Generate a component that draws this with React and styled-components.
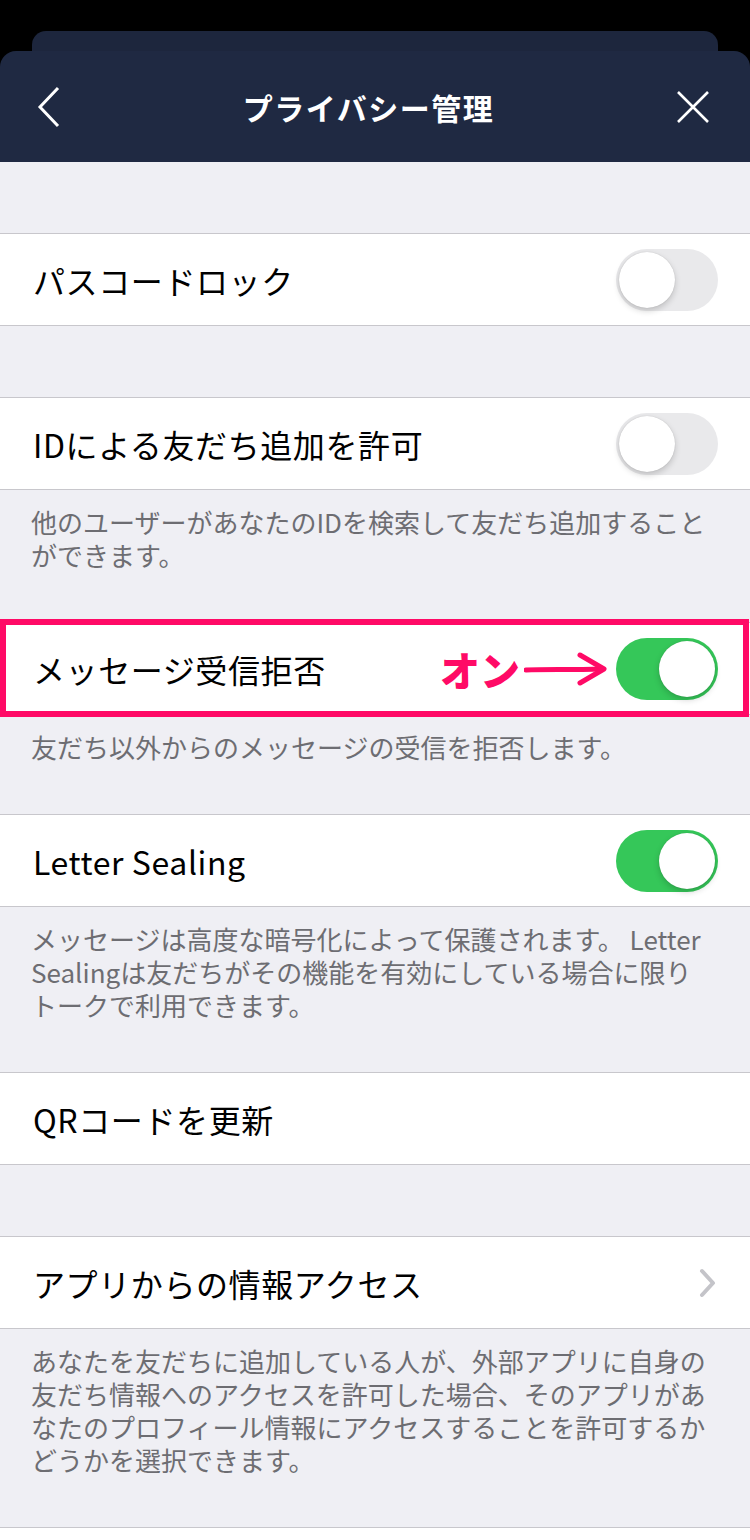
import React, { useState } from 'react';
import styled, { createGlobalStyle } from 'styled-components';

const GlobalStyle = createGlobalStyle`
  * { box-sizing: border-box; }
  html, body {
    margin: 0;
    padding: 0;
    background: #000;
    font-family: "Noto Sans CJK JP", "Noto Sans", sans-serif;
  }
`;

const sections = [
  { gap: true },
  { id: 'passcode', label: 'パスコードロック', type: 'toggle', on: false },
  { gap: true },
  {
    id: 'idadd',
    label: 'IDによる友だち追加を許可',
    type: 'toggle',
    on: false,
    note: ['他のユーザーがあなたのIDを検索して友だち追加すること', 'ができます。'],
  },
  {
    id: 'reject',
    label: 'メッセージ受信拒否',
    type: 'toggle',
    on: true,
    marked: true,
    note: ['友だち以外からのメッセージの受信を拒否します。'],
  },
  {
    id: 'sealing',
    label: 'Letter Sealing',
    type: 'toggle',
    on: true,
    note: [
      'メッセージは高度な暗号化によって保護されます。 Letter',
      'Sealingは友だちがその機能を有効にしている場合に限り',
      'トークで利用できます。',
    ],
  },
  { id: 'qr', label: 'QRコードを更新', type: 'plain' },
  { gap: true },
  {
    id: 'apps',
    label: 'アプリからの情報アクセス',
    type: 'link',
    note: [
      'あなたを友だちに追加している人が、外部アプリに自身の',
      '友だち情報へのアクセスを許可した場合、そのアプリがあ',
      'なたのプロフィール情報にアクセスすることを許可するか',
      'どうかを選択できます。',
    ],
  },
  { id: 'tail', label: '', type: 'plain' },
];

export default function App() {
  const [state, setState] = useState(() =>
    Object.fromEntries(sections.filter((s) => s.type === 'toggle').map((s) => [s.id, s.on]))
  );

  const flip = (id) => setState((prev) => ({ ...prev, [id]: !prev[id] }));

  return (
    <>
      <GlobalStyle />
      <Screen>
        <BackSheet />
        <Header>
          <NavButton aria-label="戻る">
            <svg width="24" height="42" viewBox="0 0 24 42" fill="none">
              <path d="M21 2 L3 21 L21 40" stroke="#fff" strokeWidth="3" />
            </svg>
          </NavButton>
          <Title>プライバシー管理</Title>
          <NavButton aria-label="閉じる">
            <svg width="34" height="34" viewBox="0 0 34 34" fill="none">
              <path d="M2 2 L32 32 M32 2 L2 32" stroke="#fff" strokeWidth="2.6" />
            </svg>
          </NavButton>
        </Header>

        <Body>
          {sections.map((s, i) => {
            if (s.gap) return <Gap key={`gap-${i}`} />;
            return (
              <React.Fragment key={s.id}>
                <Row>
                  <Label>{s.label}</Label>
                  {s.marked && (
                    <Callout>
                      <CalloutText>オン</CalloutText>
                      <svg width="84" height="40" viewBox="0 0 84 40" fill="none">
                        <path
                          d="M2 21 C20 20 45 21 78 20"
                          stroke="#ff0a66"
                          strokeWidth="5"
                          strokeLinecap="round"
                        />
                        <path
                          d="M56 6 L80 20 L56 34"
                          stroke="#ff0a66"
                          strokeWidth="5"
                          strokeLinecap="round"
                          strokeLinejoin="round"
                        />
                      </svg>
                    </Callout>
                  )}
                  {s.type === 'toggle' && (
                    <Switch $on={state[s.id]} onClick={() => flip(s.id)} role="switch" aria-checked={state[s.id]}>
                      <Knob $on={state[s.id]} />
                    </Switch>
                  )}
                  {s.type === 'link' && (
                    <svg width="20" height="30" viewBox="0 0 20 30" fill="none">
                      <path
                        d="M4 3 L15 15 L4 27"
                        stroke="#c4c4c9"
                        strokeWidth="4"
                        strokeLinecap="round"
                        strokeLinejoin="round"
                      />
                    </svg>
                  )}
                  {s.marked && <Marker />}
                </Row>
                {s.note && (
                  <Note>
                    {s.note.map((line, j) => (
                      <NoteLine key={j}>{line}</NoteLine>
                    ))}
                  </Note>
                )}
              </React.Fragment>
            );
          })}
        </Body>
      </Screen>
    </>
  );
}

const Screen = styled.div`
  width: 750px;
  height: 1540px;
  overflow: hidden;
  background: #000;
  padding-top: 31px;
  display: flex;
  flex-direction: column;
`;

const BackSheet = styled.div`
  height: 20px;
  flex-shrink: 0;
  margin: 0 32px;
  background: #1d263d;
  border-radius: 14px 14px 0 0;
`;

const Header = styled.header`
  height: 111px;
  flex-shrink: 0;
  background: #1f2942;
  border-radius: 16px 16px 0 0;
  display: flex;
  align-items: center;
  justify-content: space-between;
  padding: 0 40px 0 37px;
`;

const NavButton = styled.button`
  background: none;
  border: none;
  padding: 0;
  display: flex;
  align-items: center;
  cursor: pointer;
`;

const Title = styled.h1`
  margin: 0;
  color: #fff;
  font-size: 30px;
  font-weight: 700;
  letter-spacing: 1.5px;
`;

const Body = styled.main`
  flex: 1 0 auto;
  background: #efeff4;
  display: flex;
  flex-direction: column;
`;

const Gap = styled.div`
  height: 71px;
  flex-shrink: 0;
`;

const Row = styled.div`
  position: relative;
  height: 93px;
  flex-shrink: 0;
  background: #fff;
  border-top: 1px solid #c8c7cc;
  border-bottom: 1px solid #c8c7cc;
  display: flex;
  align-items: center;
  padding: 0 32px 0 33px;
  gap: 6px;
`;

const Label = styled.span`
  flex: 1;
  font-size: 32px;
  color: #000;
  letter-spacing: 0.6px;
  white-space: nowrap;
`;

const Switch = styled.button`
  width: 102px;
  height: 62px;
  flex-shrink: 0;
  border: none;
  border-radius: 31px;
  padding: 0;
  background: ${(p) => (p.$on ? '#35c759' : '#e9e9eb')};
  display: flex;
  align-items: center;
  cursor: pointer;
`;

const Knob = styled.span`
  width: 56px;
  height: 56px;
  border-radius: 50%;
  background: #fff;
  margin-left: ${(p) => (p.$on ? '43px' : '3px')};
  box-shadow: 0 3px 6px rgba(0, 0, 0, 0.18), 0 0 1px rgba(0, 0, 0, 0.2);
`;

const Callout = styled.div`
  display: flex;
  align-items: center;
  gap: 4px;
  margin-right: 2px;
`;

const CalloutText = styled.span`
  color: #ff0a66;
  font-size: 40px;
  font-weight: 900;
  line-height: 1;
`;

const Marker = styled.div`
  position: absolute;
  top: -4px;
  bottom: -3px;
  left: 0;
  right: 1px;
  border: 6px solid #ff0a66;
  pointer-events: none;
`;

const Note = styled.div`
  flex-shrink: 0;
  padding: 15px 31px 51px 31px;
  display: flex;
  flex-direction: column;
`;

const NoteLine = styled.p`
  margin: 0;
  height: 33px;
  font-size: 26px;
  line-height: 33px;
  color: #6d6d72;
  white-space: nowrap;
  overflow: visible;
`;
